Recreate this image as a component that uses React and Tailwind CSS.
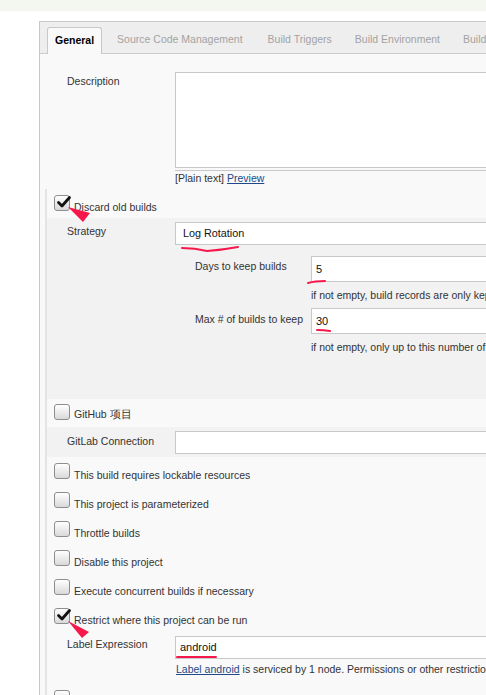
import React from "react";

const FONT = { fontFamily: '"Liberation Sans", Arial, sans-serif' };

function Check({ checked }) {
  return (
    <div className="relative w-[16px] h-[16px] shrink-0 rounded-[3px] border border-[#8e8e8e] bg-linear-to-b from-white to-[#d9d9d9]">
      {checked && (
        <svg className="absolute left-[1px] top-[-2px]" width="16" height="16" viewBox="0 0 16 16">
          <path d="M2.5 8.5 L6 12 L13.5 3.5" fill="none" stroke="#111" strokeWidth="2.8" strokeLinecap="round" strokeLinejoin="round" />
        </svg>
      )}
    </div>
  );
}

function CheckRow({ label, checked }) {
  return (
    <div className="h-[29px] flex items-start pl-[7px]">
      <div className="mt-[6px]">
        <Check checked={checked} />
      </div>
      <div className="mt-[11px] ml-[4px] leading-[14px] text-[#333] whitespace-nowrap">{label}</div>
    </div>
  );
}

function Box({ className, children }) {
  return (
    <div className={"bg-white border border-[#c8c8c8] flex items-center " + className}>{children}</div>
  );
}

export default function App() {
  return (
    <div className="relative w-[486px] h-[695px] overflow-hidden bg-white text-[10.5px]" style={FONT}>
      <div className="h-[11px] bg-[#f4f6f0]" />
      <div className="h-[10px]" />
      <div className="ml-[39px] w-[720px] border-l border-t border-[#c8c8c8] bg-[#f9f9f9]">
        {/* tab bar */}
        <div className="h-[32px] bg-[#eeeeee] border-b border-[#cccccc] flex items-end pl-[7px]">
          <div className="h-[27px] -mb-px px-[7px] mr-[7px] rounded-t-[3px] border border-b-0 border-[#c8c8c8] bg-[#f9f9f9] flex items-center font-bold text-black text-[10.5px]">
            General
          </div>
          {["Source Code Management", "Build Triggers", "Build Environment", "Build"].map((t, i) => (
            <div key={t} className={"h-[26px] px-[8px] flex items-center text-[#a3a3a3] text-[10.5px] whitespace-nowrap " + (i === 0 ? "mr-[9px]" : "mr-[7px]")}>
              {t}
            </div>
          ))}
        </div>

        <div className="pl-[5px]">
          {/* description */}
          <div className="flex pt-[18px]">
            <div className="w-[130px] shrink-0 pl-[22px] mt-[2px] leading-[14px] text-[#333]">Description</div>
            <div className="flex-1">
              <div className="h-[96px] bg-white border border-[#c8c8c8]" />
              <div className="mt-[2px] h-px bg-[#c8c8c8]" />
              <div className="leading-[14px] text-[#333]">
                [Plain text] <span className="text-[#204a87] underline">Preview</span>
              </div>
            </div>
          </div>

          <div className="mt-[4px] border-l-[2px] border-[#e4e4e4]">
            <CheckRow label="Discard old builds" checked />
            <div className="bg-[#f2f2f2] pb-[45px]">
              <div className="h-[29px] flex items-start">
                <div className="w-[128px] shrink-0 pl-[20px] mt-[6px] leading-[14px] text-[#333]">Strategy</div>
                <Box className="flex-1 mt-[4px] h-[23px] pl-[7px] text-[#111] text-[10.8px]">Log Rotation</Box>
              </div>
              <div className="flex items-start pt-[9px]">
                <div className="w-[264px] shrink-0 pl-[148px] mt-[3px] leading-[14px] text-[#333] whitespace-nowrap">Days to keep builds</div>
                <div className="flex-1">
                  <Box className="h-[26px] pl-[4px] text-[#111] text-[11px]">5</Box>
                  <div className="mt-[6px] leading-[14px] text-[#333] whitespace-nowrap">
                    if not empty, build records are only kept up to this number of days
                  </div>
                </div>
              </div>
              <div className="flex items-start mt-[6px]">
                <div className="w-[264px] shrink-0 pl-[148px] mt-[4px] leading-[14px] text-[#333] whitespace-nowrap">Max # of builds to keep</div>
                <div className="flex-1">
                  <Box className="h-[26px] pl-[4px] text-[#111] text-[11px]">30</Box>
                  <div className="mt-[6px] leading-[14px] text-[#333] whitespace-nowrap">
                    if not empty, only up to this number of build records are kept
                  </div>
                </div>
              </div>
            </div>

            <div className="h-[28px] flex items-start pl-[7px]">
              <div className="mt-[5px]">
                <Check />
              </div>
              <div className="mt-[8px] ml-[4px] leading-[14px] text-[#333]">GitHub 项目</div>
            </div>
            <div className="h-[30px] bg-[#f2f2f2] flex items-start">
              <div className="w-[128px] shrink-0 pl-[20px] mt-[7px] leading-[14px] text-[#333] whitespace-nowrap">GitLab Connection</div>
              <Box className="flex-1 mt-[4px] h-[23px]" />
            </div>

            <CheckRow label="This build requires lockable resources" />
            <CheckRow label="This project is parameterized" />
            <CheckRow label="Throttle builds" />
            <CheckRow label="Disable this project" />
            <CheckRow label="Execute concurrent builds if necessary" />
            <CheckRow label="Restrict where this project can be run" checked />

            <div className="flex items-start">
              <div className="w-[128px] shrink-0 pl-[20px] mt-[6px] leading-[14px] text-[#333] whitespace-nowrap">Label Expression</div>
              <div className="flex-1 min-w-0">
                <Box className="mt-[5px] h-[23px] pl-[4px] text-[#111] text-[11px]">android</Box>
                <div className="mt-[3px] pl-px leading-[14px] text-[#333] whitespace-nowrap">
                  <span className="text-[#204a87] underline">Label android</span> is serviced by 1 node. Permissions or other restrictions provided by plugins may prevent this job from running on those nodes.
                </div>
              </div>
            </div>
            <div className="h-[8px]" />
            <CheckRow label="" />
          </div>
        </div>
      </div>

      {/* red annotations */}
      <svg className="absolute left-0 top-0 pointer-events-none" width="486" height="695" viewBox="0 0 486 695">
        <g fill="#f7184b">
          <polygon points="68,207 90,213 83,222" />
          <polygon points="68,621 89,632 82,638" />
        </g>
        <g fill="none" stroke="#f7184b" strokeWidth="2" strokeLinecap="round">
          <path d="M182,248 Q195,248 207,251 Q222,250 238,247" />
          <path d="M308,283 Q315,281 325,281" />
          <path d="M317,330 Q324,330 330,331" />
          <path d="M177,657 L216,657" />
        </g>
      </svg>
    </div>
  );
}
